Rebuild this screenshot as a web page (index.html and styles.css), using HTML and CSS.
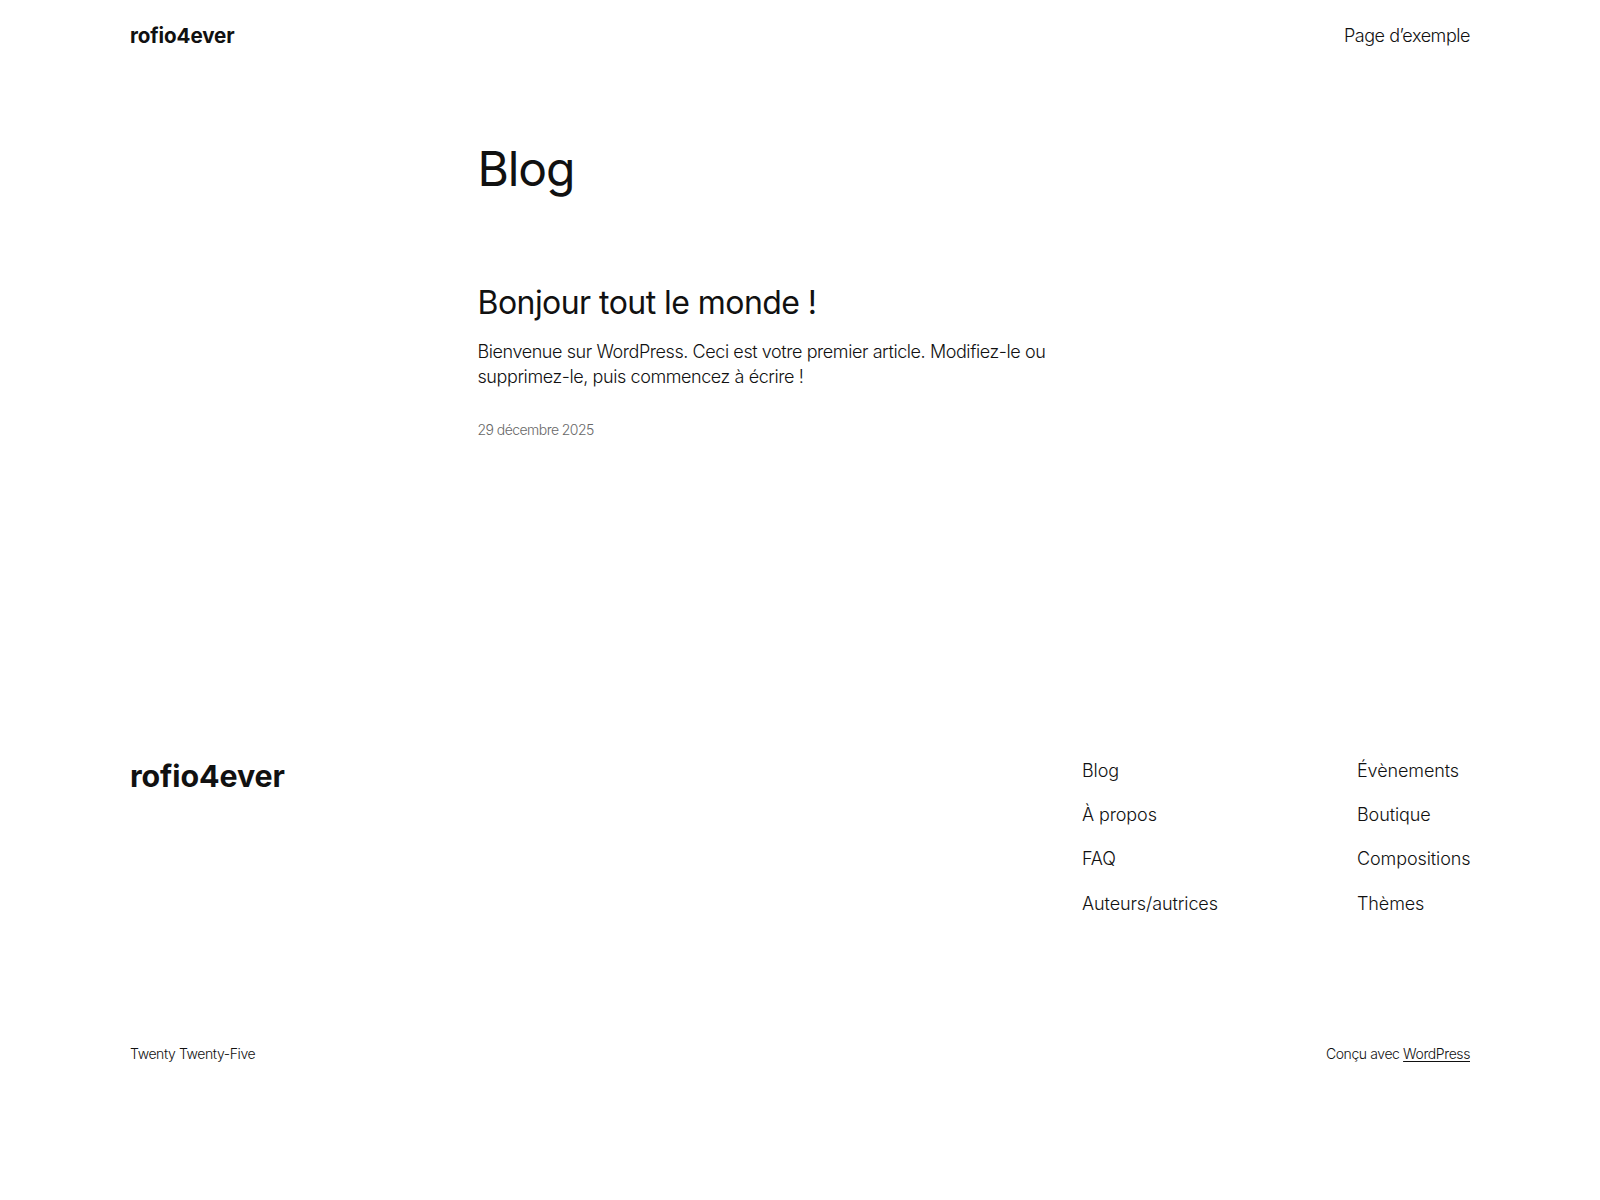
FILE: index.html
```html
<!DOCTYPE html>
<html lang="fr">
<head>
<meta charset="utf-8">
<title>Blog – rofio4ever</title>
<link rel="stylesheet" href="styles.css">
</head>
<body>
<header class="site-header">
  <a class="site-title" href="#">rofio4ever</a>
  <nav class="header-nav"><a href="#">Page d’exemple</a></nav>
</header>

<main class="content">
  <h1 class="page-title">Blog</h1>
  <article class="post">
    <h2 class="post-title"><a href="#">Bonjour tout le monde !</a></h2>
    <p class="post-excerpt">Bienvenue sur WordPress. Ceci est votre premier article. Modifiez-le ou supprimez-le, puis commencez à écrire !</p>
    <time class="post-date">29 décembre 2025</time>
  </article>
</main>

<footer class="site-footer">
  <div class="footer-top">
    <a class="footer-title" href="#">rofio4ever</a>
    <div class="footer-navs">
      <nav class="footer-col">
        <a href="#">Blog</a>
        <a href="#">À propos</a>
        <a href="#">FAQ</a>
        <a href="#">Auteurs/autrices</a>
      </nav>
      <nav class="footer-col">
        <a href="#">Évènements</a>
        <a href="#">Boutique</a>
        <a href="#">Compositions</a>
        <a href="#">Thèmes</a>
      </nav>
    </div>
  </div>
  <div class="footer-bottom">
    <p>Twenty Twenty-Five</p>
    <p>Conçu avec <a class="wp-link" href="#">WordPress</a></p>
  </div>
</footer>
</body>
</html>
```

FILE: styles.css
```css
* { box-sizing: border-box; }

body {
  margin: 0;
  background: #ffffff;
  color: #111111;
  font-family: Inter, "Noto Sans", sans-serif;
  font-weight: 300;
  font-size: 18px;
  line-height: 1.4;
  letter-spacing: -0.1px;
}

a { color: inherit; text-decoration: none; }

.site-header {
  width: 1340px;
  margin: 0 auto;
  padding-top: 22px;
  display: flex;
  justify-content: space-between;
  align-items: center;
}

.site-title {
  font-size: 20.6px;
  font-weight: 700;
  line-height: 28px;
}

.header-nav {
  font-size: 18px;
  line-height: 28px;
  letter-spacing: -0.45px;
}

.content {
  width: 645px;
  margin: 92px auto 0;
}

.page-title {
  margin: 0;
  font-size: 48px;
  font-weight: 400;
  line-height: 1.125;
  letter-spacing: -1.1px;
}

.post { margin-top: 89px; }

.post-title {
  margin: 0;
  font-size: 32px;
  font-weight: 400;
  line-height: 1.125;
  letter-spacing: -0.55px;
}

.post-excerpt {
  margin: 18px 0 0;
  font-size: 18px;
  line-height: 1.4;
  letter-spacing: -0.42px;
}

.post-date {
  display: block;
  margin-top: 31px;
  font-size: 14px;
  line-height: 1.4;
  color: #686868;
  letter-spacing: -0.55px;
}

.site-footer {
  width: 1340px;
  margin: 318px auto 0;
}

.footer-top {
  display: flex;
  justify-content: space-between;
  align-items: flex-start;
}

.footer-title {
  margin-top: 0;
  font-size: 30.4px;
  font-weight: 700;
  line-height: 1.2;
}

.footer-navs {
  display: grid;
  grid-template-columns: 275px 113px;
}

.footer-col {
  display: flex;
  flex-direction: column;
  gap: 18.8px;
  font-size: 18px;
  line-height: 25.2px;
}

.footer-col a:last-child { margin-top: 1px; }

.footer-bottom {
  margin-top: 128px;
  display: flex;
  justify-content: space-between;
  font-size: 14px;
  line-height: 1.4;
  letter-spacing: -0.4px;
}

.footer-bottom p { margin: 0; }

.wp-link { text-decoration: underline; text-underline-offset: 2px; }
```
